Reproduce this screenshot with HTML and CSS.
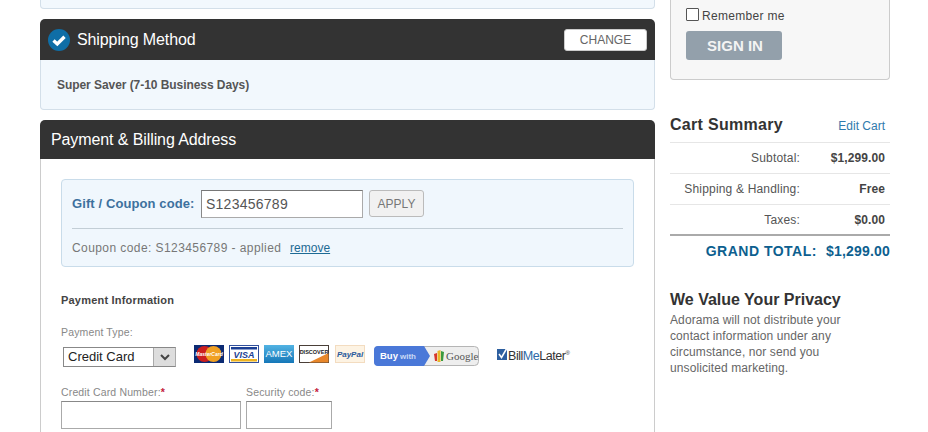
FILE: index.html
```html
<!DOCTYPE html>
<html lang="en">
<head>
<meta charset="utf-8">
<title>Checkout</title>
<link rel="stylesheet" href="styles.css">
</head>
<body>
<div class="page">
  <main class="main">
    <div class="stub"></div>
    <section class="step">
      <header class="bar bar-ship">
        <svg class="tick" width="22" height="22" viewBox="0 0 22 22"><circle cx="11" cy="11" r="11" fill="#0f6ea6"/><path d="M5.500 11.500l3.800 3.400L16.500 7.800" fill="none" stroke="#fff" stroke-width="3.400"/></svg>
        <h2 class="bar-title">Shipping Method</h2>
        <button class="change">CHANGE</button>
      </header>
      <div class="ship-body">Super Saver (7-10 Business Days)</div>
    </section>
    <section class="step">
      <header class="bar bar-pay"><h2 class="bar-title">Payment &amp; Billing Address</h2></header>
      <div class="pay-body">
        <div class="coupon">
          <div class="coupon-row">
            <label class="coupon-label">Gift / Coupon code:</label>
            <input class="coupon-input" value="S123456789">
            <button class="apply">APPLY</button>
          </div>
          <div class="coupon-note">Coupon code: S123456789 - applied <a class="remove" href="#">remove</a></div>
        </div>
        <h3 class="pay-title">Payment Information</h3>
        <div class="field-label">Payment Type:</div>
        <div class="type-row">
          <div class="select"><span class="select-text">Credit Card</span><span class="select-arrow"><svg width="10" height="7" viewBox="0 0 10 7"><path d="M1 1l4 4 4-4" fill="none" stroke="#444" stroke-width="2"/></svg></span></div>
          <div class="cards">
            <svg class="card" width="30" height="18" viewBox="0 0 30 18"><rect width="30" height="18" fill="#0b2a73"/><circle cx="10.500" cy="9" r="8" fill="#cc1f1f"/><circle cx="19.500" cy="9" r="8" fill="#f0a023"/><text x="15" y="11" font-size="5" font-weight="700" font-style="italic" fill="#fff" text-anchor="middle" font-family="Liberation Sans">MasterCard</text></svg>
            <svg class="card" width="30" height="18" viewBox="0 0 30 18"><rect x=".5" y=".5" width="29" height="17" fill="#fff" stroke="#31509c"/><rect x="2" y="2" width="26" height="2.500" fill="#1b3f94"/><rect x="2" y="14" width="26" height="2.500" fill="#eeb31f"/><text x="15" y="12.500" font-size="9" font-weight="700" font-style="italic" fill="#1b3f94" text-anchor="middle" font-family="Liberation Sans">VISA</text></svg>
            <svg class="card" width="30" height="18" viewBox="0 0 30 18"><defs><linearGradient id="amex" x1="0" y1="0" x2="0" y2="1"><stop offset="0" stop-color="#52b3e3"/><stop offset="1" stop-color="#1577b8"/></linearGradient></defs><rect width="30" height="18" fill="url(#amex)"/><text x="15" y="12" font-size="9.500" fill="#fff" text-anchor="middle" font-family="Liberation Sans">AMEX</text></svg>
            <svg class="card" width="30" height="18" viewBox="0 0 30 18"><rect x=".5" y=".5" width="29" height="17" fill="#fff" stroke="#4a3f38"/><path d="M10 17.500L29.500 17.500V8z" fill="#e8872a"/><text x="15" y="9" font-size="5.500" font-weight="700" fill="#222" text-anchor="middle" font-family="Liberation Sans">DISCOVER</text></svg>
            <svg class="card card-paypal" width="30" height="18" viewBox="0 0 30 18"><rect x=".5" y=".5" width="29" height="17" fill="#fdf3e3" stroke="#f3dcc0"/><text x="15" y="12" font-size="8" font-weight="700" font-style="italic" fill="#2a5a9c" text-anchor="middle" font-family="Liberation Sans">PayPal</text></svg>
            <svg class="card-google" width="105" height="20" viewBox="0 0 105 20"><rect x=".5" y=".5" width="104" height="19" rx="4" fill="#eee" stroke="#b5b5b5"/><path d="M4 0H50L56 10 50 20H4a4 4 0 0 1-4-4V4a4 4 0 0 1 4-4z" fill="#4a78d8"/><text x="6" y="13" font-size="9.500" font-weight="700" fill="#fff" font-family="Liberation Sans">Buy</text><text x="26" y="13" font-size="8" font-weight="700" fill="#c9d8f5" font-family="Liberation Sans">with</text><path d="M60 8l3-1v8h-2z" fill="#d7382c"/><path d="M63.500 5l3-1v12h-3z" fill="#e9b82a"/><path d="M67 5l3 1-1 9h-2z" fill="#3b9a3f"/><text x="72" y="14" font-size="11" fill="#555" font-family="Liberation Serif">Google</text></svg>
            <svg class="card-bml" width="74" height="18" viewBox="0 0 74 18"><rect x="0" y="3" width="10" height="11" fill="#2d5f9f"/><path d="M2 8l2.500 3.500L10 2" fill="none" stroke="#fff" stroke-width="1.500"/><text x="11" y="14" font-size="12.500" fill="#333" font-family="Liberation Sans" textLength="62">Bill<tspan fill="#2d6aa8">Me</tspan>Later<tspan font-size="6" dy="-5">®</tspan></text></svg>
          </div>
        </div>
        <div class="cc-row">
          <div class="cc-number">
            <label class="field-label cc-label">Credit Card Number:<span class="req">*</span></label>
            <input class="text-input number-input">
          </div>
          <div class="cc-security">
            <label class="field-label cc-label">Security code:<span class="req">*</span></label>
            <input class="text-input security-input">
          </div>
        </div>
      </div>
    </section>
  </main>
  <aside class="side">
    <div class="login">
      <label class="remember"><span class="check"></span>Remember me</label>
      <button class="signin">SIGN IN</button>
    </div>
    <div class="summary-head"><h2 class="summary-title">Cart Summary</h2><a class="edit" href="#">Edit Cart</a></div>
    <div class="row"><span class="row-label">Subtotal:</span><span class="row-value">$1,299.00</span></div>
    <div class="row"><span class="row-label">Shipping &amp; Handling:</span><span class="row-value">Free</span></div>
    <div class="row row-last"><span class="row-label">Taxes:</span><span class="row-value">$0.00</span></div>
    <div class="grand"><span class="grand-label">GRAND TOTAL:</span><span class="grand-value">$1,299.00</span></div>
    <h2 class="privacy-title">We Value Your Privacy</h2>
    <p class="privacy">Adorama will not distribute your contact information under any circumstance, nor send you unsolicited marketing.</p>
  </aside>
</div>
</body>
</html>
```
FILE: styles.css
```css
* { box-sizing: border-box; }
html, body { margin: 0; height: 432px; overflow: hidden; background: #fff; }
body { font-family: "Liberation Sans", Arial, sans-serif; color: #555; font-size: 12px; }
h2, h3, p { margin: 0; }
.page { display: flex; gap: 15px; padding-left: 40px; width: 890px; align-items: flex-start; }
.main { width: 615px; flex: none; }
.side { width: 220px; flex: none; }

.stub { height: 9px; background: #f2f8fd; border: 1px solid #d3dfe9; border-top: 0; border-radius: 0 0 4px 4px; margin-bottom: 10px; }
.step { margin-bottom: 10px; }
.bar { display: flex; align-items: center; background: #333; border-radius: 5px 5px 0 0; color: #fff; }
.bar-ship { height: 41px; padding: 0 8px; }
.bar-pay { height: 39px; padding: 0 11px; }
.tick { flex: none; margin-right: 7px; }
.bar-title { font-size: 16px; font-weight: 400; color: #fff; flex: 1; letter-spacing: -.1px; }
.change { width: 83px; height: 22px; background: #fff; border: 1px solid #ccc; border-radius: 3px; color: #666; font: 12px "Liberation Sans", Arial, sans-serif; padding: 0; }
.ship-body { height: 50px; background: #f2f8fd; border: 1px solid #d3dfe9; border-top: 0; border-radius: 0 0 4px 4px; padding: 17px 16px 0; font-weight: 700; color: #555; line-height: 16px; letter-spacing: -.06px; }

.pay-body { height: 273px; border-left: 1px solid #ccc; border-right: 1px solid #ccc; padding: 20px 20px 0; }
.coupon { height: 88px; background: #f0f7fd; border: 1px solid #c9dcea; border-radius: 4px; padding: 10px 10px 0; }
.coupon-row { display: flex; align-items: flex-start; height: 39px; border-bottom: 1px solid #c3ced6; }
.coupon-label { font-size: 13px; font-weight: 700; color: #3d719e; line-height: 27px; width: 129px; flex: none; white-space: nowrap; letter-spacing: .1px; }
.coupon-input { width: 162px; height: 28px; border: 1px solid #aaa; border-top-color: #777; border-left-color: #888; background: #fff; padding: 0 4px; font: 14px "Liberation Sans", Arial, sans-serif; color: #555; letter-spacing: .25px; }
.apply { width: 55px; height: 27px; margin-left: 6px; background: #f1f1f1; border: 1px solid #bbb; border-radius: 3px; color: #777; font: 12px "Liberation Sans", Arial, sans-serif; padding: 0; }
.coupon-note { margin-top: 10px; font-size: 12px; line-height: 18px; color: #777; letter-spacing: .42px; }
.remove { color: #1d6a94; margin-left: 5px; letter-spacing: 0; }

.pay-title { font-size: 11px; font-weight: 700; color: #444; line-height: 14px; margin-top: 26px; letter-spacing: .2px; }
.field-label { font-size: 10.500px; color: #888; line-height: 12px; margin-top: 19px; letter-spacing: .15px; }
.type-row { display: flex; align-items: flex-start; margin-top: 3px; height: 45px; }
.select { display: flex; margin: 6px 0 0 2px; width: 113px; height: 20px; border: 1px solid #888; border-right-color: #aaa; background: #fff; }
.select-text { flex: 1; font-size: 13px; line-height: 18px; color: #222; padding-left: 4px; }
.select-arrow { width: 22px; background: #ddd; border-left: 1px solid #aaa; display: flex; align-items: center; justify-content: center; }
.cards { display: flex; align-items: flex-start; margin-left: 18px; margin-top: 4px; }
.card { flex: none; margin-right: 5px; }
.card-paypal { margin-left: 1px; margin-right: 9px; }
.card-google { flex: none; margin-top: 1px; margin-right: 18px; }
.card-bml { flex: none; margin-top: 1px; }

.cc-row { display: flex; gap: 5px; }
.cc-label { display: block; margin-top: 0; margin-bottom: 3px; }
.req { color: #c4213c; font-weight: 700; }
.text-input { display: block; height: 28px; border: 1px solid #aaa; border-top-color: #888; background: #fff; padding: 0; }
.number-input { width: 180px; }
.security-input { width: 86px; }

.login { height: 80px; background: #f7f7f7; border: 1px solid #ccc; border-top: 0; border-radius: 0 0 4px 4px; padding: 8px 15px 0; }
.remember { display: flex; align-items: flex-start; font-size: 12px; color: #444; line-height: 16px; letter-spacing: .3px; }
.check { width: 13px; height: 13px; border: 1px solid #555; background: #fff; border-radius: 1px; margin-right: 3px; }
.signin { display: block; margin-top: 7px; width: 96px; height: 29px; background: #93a0ab; border: 0; border-radius: 3px; color: #f4f4f4; font: 700 15px "Liberation Sans", Arial, sans-serif; padding: 0 0 0 2px; }

.summary-head { display: flex; justify-content: space-between; align-items: baseline; margin-top: 35px; padding-right: 5px; border-bottom: 1px solid #e6e6e6; height: 28px; line-height: 20px; }
.summary-title { font-size: 16px; font-weight: 700; color: #333; letter-spacing: .3px; }
.edit { color: #2f7bad; text-decoration: none; font-size: 12px; }
.row { display: flex; height: 31px; align-items: center; border-bottom: 1px solid #e6e6e6; font-size: 12px; padding-right: 5px; }
.row-label { width: 130px; text-align: right; color: #555; letter-spacing: .18px; }
.row-value { flex: 1; text-align: right; font-weight: 700; color: #444; letter-spacing: .1px; }
.row-last { border-bottom: 2px solid #aaa; }
.grand { display: flex; justify-content: flex-end; gap: 9px; margin-top: 6px; font-size: 14px; font-weight: 700; color: #0d5f8f; line-height: 18px; }
.grand-label { letter-spacing: .5px; }
.grand-value { letter-spacing: .2px; }
.privacy-title { margin-top: 31px; font-size: 16px; font-weight: 700; color: #333; line-height: 18px; }
.privacy { margin-top: 3px; width: 176px; font-size: 12px; line-height: 16px; color: #666; letter-spacing: .1px; }
```
